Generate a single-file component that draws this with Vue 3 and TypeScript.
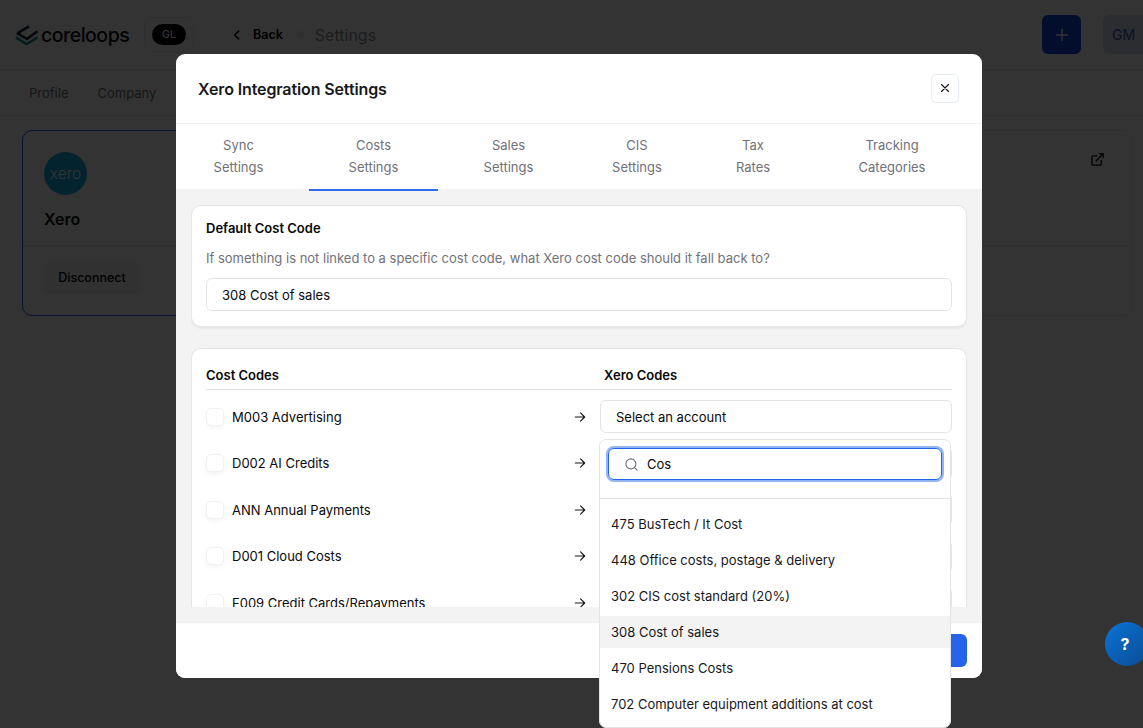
<script setup lang="ts">
const tabs: [string, string][] = [
  ['Sync', 'Settings'],
  ['Costs', 'Settings'],
  ['Sales', 'Settings'],
  ['CIS', 'Settings'],
  ['Tax', 'Rates'],
  ['Tracking', 'Categories'],
]
const rows: string[] = [
  'M003 Advertising',
  'D002 AI Credits',
  'ANN Annual Payments',
  'D001 Cloud Costs',
  'F009 Credit Cards/Repayments',
  'C004 Equipment',
]
const accounts: string[] = [
  '475 BusTech / It Cost',
  '448 Office costs, postage & delivery',
  '302 CIS cost standard (20%)',
  '308 Cost of sales',
  '470 Pensions Costs',
  '702 Computer equipment additions at cost',
]
</script>

<template>
  <div class="page">
    <header class="topbar">
      <div class="logo">
        <svg width="24" height="24" viewBox="0 0 24 24" fill="none" stroke-width="2.6" stroke-linecap="square">
          <path d="M3 10.5 L12 16 L21.5 9" stroke="#0f2a3a" />
          <path d="M13 4 L4.5 9" stroke="#0f2a3a" />
          <path d="M2 15 L11.5 21 L21.5 15" stroke="#1f8a9c" />
        </svg>
        <span class="logo-text">coreloops</span>
      </div>
      <div class="org"><span class="org-pill">GL</span></div>
      <svg class="back-icon" width="14" height="14" viewBox="0 0 24 24" fill="none" stroke="#000" stroke-width="2.6" stroke-linecap="round" stroke-linejoin="round">
        <path d="M15 5l-7 7 7 7" />
      </svg>
      <span class="back">Back</span>
      <span class="dot"></span>
      <span class="crumb">Settings</span>
      <span class="spacer"></span>
      <button class="plus">
        <svg width="14" height="14" viewBox="0 0 14 14" stroke="#fff" stroke-width="1.4"><path d="M7 1v12M1 7h12" /></svg>
      </button>
      <div class="avatar">GM</div>
    </header>
    <nav class="subnav">
      <span>Profile</span>
      <span>Company</span>
    </nav>
    <main class="cards">
      <section class="int-card active">
        <div class="int-top">
          <div class="xero-logo">xero</div>
          <div class="int-name">Xero</div>
        </div>
        <div class="int-bottom"><button class="disconnect">Disconnect</button></div>
      </section>
      <section class="int-card">
        <div class="int-top">
          <svg class="ext" width="15" height="15" viewBox="0 0 24 24" fill="none" stroke="#000" stroke-width="2" stroke-linecap="round" stroke-linejoin="round">
            <path d="M18 13v6a2 2 0 0 1-2 2H5a2 2 0 0 1-2-2V8a2 2 0 0 1 2-2h6" />
            <path d="M15 3h6v6" />
            <path d="M10 14L21 3" />
          </svg>
        </div>
        <div class="int-bottom"></div>
      </section>
    </main>

    <div class="overlay">
      <div class="modal">
        <div class="modal-head">
          <h2>Xero Integration Settings</h2>
          <button class="close" aria-label="Close">
            <svg width="14" height="14" viewBox="0 0 24 24" fill="none" stroke="#18181b" stroke-width="2" stroke-linecap="round">
              <path d="M18 6L6 18M6 6l12 12" />
            </svg>
          </button>
        </div>
        <div class="tabs">
          <div v-for="(t, i) in tabs" :key="t[0]" class="tab" :class="{ on: i === 1 }">
            <span>{{ t[0] }}</span><span>{{ t[1] }}</span>
          </div>
        </div>
        <div class="modal-body">
          <div class="scroller">
            <section class="panel">
              <h3>Default Cost Code</h3>
              <p>If something is not linked to a specific cost code, what Xero cost code should it fall back to?</p>
              <div class="select wide">308 Cost of sales</div>
            </section>
            <section class="panel map">
              <div class="map-head">
                <span>Cost Codes</span>
                <span class="xero-col">Xero Codes</span>
              </div>
              <div class="map-rows">
                <div v-for="r in rows" :key="r" class="map-row">
                  <span class="check"></span>
                  <span class="code">{{ r }}</span>
                  <svg class="arrow" width="14" height="14" viewBox="0 0 24 24" fill="none" stroke="#18181b" stroke-width="2" stroke-linecap="round" stroke-linejoin="round">
                    <path d="M4 12h16M13 5l7 7-7 7" />
                  </svg>
                  <div class="select row-select">Select an account</div>
                </div>
              </div>
            </section>
          </div>
        </div>
        <div class="modal-foot">
          <button class="save">Save</button>
        </div>

        <div class="dropdown">
          <div class="search-wrap">
            <div class="search">
              <svg width="15" height="15" viewBox="0 0 24 24" fill="none" stroke="#71717a" stroke-width="1.8" stroke-linecap="round">
                <circle cx="11" cy="11" r="8" />
                <path d="M21 21l-4.3-4.3" />
              </svg>
              <span>Cos</span>
            </div>
          </div>
          <ul class="options">
            <li v-for="a in accounts" :key="a" :class="{ hl: a.startsWith('308') }">{{ a }}</li>
          </ul>
        </div>
      </div>
    </div>

    <button class="help">?</button>
  </div>
</template>

<style>
html, body { margin: 0; height: 100%; overflow: hidden; background: #fff; }
</style>

<style scoped>
* { box-sizing: border-box; }
.page {
  position: relative;
  height: 728px;
  overflow: hidden;
  background: #fff;
  font-family: Inter, "Liberation Sans", sans-serif;
  font-size: 13px;
  color: #09090b;
}
button { font-family: inherit; border: 0; }

.topbar {
  height: 70px;
  display: flex;
  align-items: center;
  padding: 0 0 0 15px;
  border-bottom: 1px solid #e8e8ea;
}
.logo { display: flex; align-items: center; gap: 2px; width: 129px; }
.logo-text { font-size: 19.5px; font-weight: 500; letter-spacing: -0.5px; color: #0b0b0f; }
.org {
  width: 50px;
  height: 35px;
  border: 1px solid #ececee;
  border-radius: 8px;
  display: flex;
  align-items: center;
  justify-content: center;
  margin-right: 36px;
}
.org-pill {
  width: 34px;
  height: 21px;
  border-radius: 11px;
  background: #000;
  color: #fff;
  font-size: 10.5px;
  font-weight: 500;
  display: flex;
  align-items: center;
  justify-content: center;
}
.back-icon { margin-right: 9px; }
.back { font-weight: 600; font-size: 12.5px; color: #000; }
.dot { width: 7px; height: 7px; border-radius: 50%; background: #e4e4e7; margin: 0 11px 0 14px; }
.crumb { font-size: 16px; color: #8f8f96; margin-left: 0; }
.spacer { flex: 1; }
.plus {
  width: 39px;
  height: 39px;
  border-radius: 6px;
  background: #0a47d8;
  display: flex;
  align-items: center;
  justify-content: center;
  margin-right: 22px;
}
.avatar {
  width: 48px;
  flex: none;
  height: 39px;
  border-radius: 6px;
  background: #dde2f4;
  color: #5560b8;
  font-size: 14px;
  font-weight: 500;
  display: flex;
  align-items: center;
  padding-left: 9px;
  margin-right: -8px;
}
.subnav {
  height: 46px;
  display: flex;
  align-items: center;
  gap: 29px;
  padding-left: 29px;
  border-bottom: 1px solid #e8e8ea;
  color: #6f6f76;
}
.cards {
  display: grid;
  grid-template-columns: 548px 548px;
  gap: 15px;
  padding: 14px 0 0 22px;
}
.int-card {
  position: relative;
  height: 186px;
  border: 1px solid #ececee;
  border-radius: 10px;
}
.int-card.active { border-color: #2563eb; }
.int-top { height: 115px; padding: 21px 21px 0; border-bottom: 1px solid #e8e8ea; }
.xero-logo {
  width: 43px;
  height: 43px;
  border-radius: 50%;
  background: #13b5ea;
  color: #fff;
  font-size: 15.5px;
  font-weight: 300;
  display: flex;
  align-items: center;
  justify-content: center;
}
.int-name { margin-top: 14px; font-size: 16px; font-weight: 600; color: #000; }
.int-bottom { padding: 15px 21px; }
.disconnect {
  width: 96px;
  height: 33px;
  border-radius: 6px;
  background: #f3f3f4;
  font-size: 12.5px;
  font-weight: 500;
  color: #000;
}
.ext { position: absolute; right: 27px; top: 21px; }

.overlay {
  position: absolute;
  inset: 0;
  background: rgba(0, 0, 0, 0.8);
  padding: 54px 0 0 176px;
}
.modal {
  position: relative;
  width: 806px;
  height: 624px;
  background: #fff;
  border-radius: 9px;
  display: flex;
  flex-direction: column;
}
.modal-head {
  height: 70px;
  flex: none;
  display: flex;
  align-items: center;
  justify-content: space-between;
  padding: 0 23px 0 22px;
  border-bottom: 1px solid #f1f1f3;
}
.modal-head h2 { margin: 0; font-size: 16px; font-weight: 600; letter-spacing: -0.12px; color: #18181b; }
.close {
  width: 28px;
  height: 29px;
  margin-top: -1px;
  background: #fff;
  border: 1px solid #e6ebf3;
  border-radius: 5px;
  display: flex;
  align-items: center;
  justify-content: center;
  padding: 0;
}
.tabs {
  flex: none;
  height: 66px;
  display: grid;
  grid-template-columns: 125px 129px 125px 116px 100px 162px;
  column-gap: 8px;
  border-bottom: 1px solid #f1f1f3;
}
.tab {
  position: relative;
  display: flex;
  flex-direction: column;
  align-items: center;
  padding-top: 11px;
  line-height: 21.5px;
  color: #71717a;
}
.tab.on::after {
  content: "";
  position: absolute;
  left: 0;
  right: 0;
  bottom: -2px;
  height: 2px;
  background: #2f6bed;
}
.modal-body {
  flex: 1;
  min-height: 0;
  background: #f3f3f4;
  padding: 15px 15px 15px;
}
.scroller { height: 402px; overflow: hidden; }
.panel {
  background: #fff;
  border: 1px solid #e6e6e9;
  border-radius: 10px;
  padding: 14px 14px 15px;
  box-shadow: 0 1px 3px rgba(0, 0, 0, 0.08);
}
.panel h3 { margin: 0; font-size: 13px; line-height: 16px; font-weight: 600; color: #09090b; }
.panel p { margin: 14px 0 12px; line-height: 16px; color: #71717a; }
.select {
  height: 33px;
  display: flex;
  align-items: center;
  padding-left: 15px;
  background: #fff;
  border: 1px solid #e4e4e7;
  border-radius: 6px;
  color: #09090b;
}
.map { margin-top: 21px; padding-bottom: 40px; }
.map-head {
  display: flex;
  height: 30px;
  margin-top: -4px;
  padding-top: 1px;
  align-items: center;
  font-weight: 600;
  border-bottom: 1px solid #e4e4e7;
  height: 31px;
}
.map-head span:first-child { width: 398px; }
.map-rows { display: flex; flex-direction: column; gap: 13.67px; margin-top: 10px; }
.map-row { display: flex; align-items: center; height: 33px; }
.check {
  width: 18px;
  height: 18px;
  flex: none;
  border: 1px solid #f1f1f3;
  border-radius: 5px;
  background: #fff;
  box-shadow: 0 2px 4px rgba(0, 0, 0, 0.05);
  margin-right: 8px;
}
.code { flex: 1; color: #09090b; }
.arrow { margin-right: 13px; flex: none; }
.row-select { width: 352px; flex: none; }
.modal-foot {
  flex: none;
  height: 56px;
  background: #fff;
  border-radius: 0 0 9px 9px;
  display: flex;
  justify-content: flex-end;
  align-items: center;
  padding-right: 15px;
  border-top: 1px solid #f1f1f3;
}
.save {
  width: 70px;
  height: 33px;
  padding: 0 26px 0 0;
  border-radius: 6px;
  background: #2563eb;
  color: #fff;
  font-size: 13px;
}
.dropdown {
  position: absolute;
  left: 423px;
  top: 385px;
  width: 352px;
  height: 289px;
  background: #fff;
  border: 1px solid #e4e4e7;
  border-radius: 7px;
  overflow: hidden;
}
.search-wrap { padding: 8px 8px 0; height: 59px; border-bottom: 1px solid #e4e4e7; }
.search {
  height: 32px;
  display: flex;
  align-items: center;
  gap: 8px;
  padding-left: 15px;
  border: 1.5px solid #2563eb;
  border-radius: 6px;
  box-shadow: 0 0 0 2px #93b4f5;
}
.options { list-style: none; margin: 0; padding: 9px 0 0; display: flex; flex-direction: column; gap: 4px; }
.options li { height: 32px; display: flex; align-items: center; padding-left: 11px; color: #18181b; }
.options li.hl { background: #f3f3f4; }

.help {
  position: absolute;
  left: 1105px;
  top: 622px;
  width: 44px;
  height: 44px;
  padding: 0 4px 0 0;
  border-radius: 50%;
  background: linear-gradient(135deg, #0a75d8, #0a4a92);
  color: #fff;
  font-size: 16px;
  font-weight: 700;
}
</style>
